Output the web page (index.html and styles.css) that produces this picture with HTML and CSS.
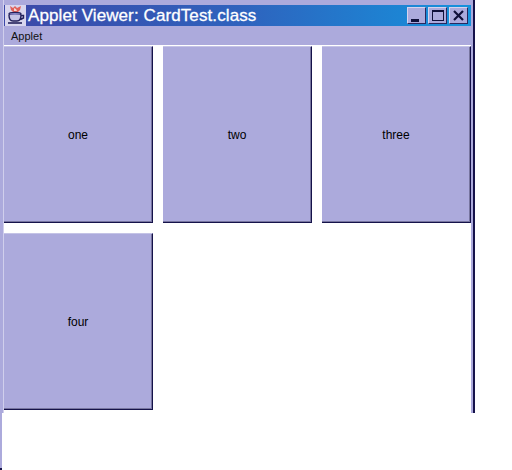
FILE: index.html
```html
<!DOCTYPE html>
<html lang="en">
<head>
    <meta charset="UTF-8">
    <title>Applet Viewer: CardTest.class</title>
    <link rel="stylesheet" href="styles.css">
</head>
<body>
    <div class="window">
        <div class="titleBar">
            <svg class="javaIcon" width="21" height="21" viewBox="0 0 21 21">
                <rect width="21" height="21" fill="#d8d6ee"/>
                <path d="M5 1l3 2 2-2 2 2 4-2-1 4-2 2H8L6 5z" fill="#e0605a"/>
                <path d="M9 3l2 1 1 2-3 0z" fill="#f4d8d0"/>
                <ellipse cx="10" cy="9" rx="6" ry="1.600" fill="#8a88c8" stroke="#22205a" stroke-width="1.400"/>
                <path d="M4 10c0 3.500 1.500 6 4 6h4c2.500 0 4-2.500 4-6M16 10.500h2.500v2.500l-3 1.500" fill="#c4c3e6" stroke="#22205a" stroke-width="1.400"/>
                <path d="M3 18h14" stroke="#22205a" stroke-width="1.600"/>
            </svg>
            <span class="titleText">Applet Viewer: CardTest.class</span>
            <div class="titleButtons">
                <div class="titleButton"><span class="minIcon"></span></div>
                <div class="titleButton"><span class="maxIcon"></span></div>
                <div class="titleButton closeButton">
                    <svg width="11" height="11" viewBox="0 0 11 11">
                        <path d="M1 1l9 9M10 1l-9 9" stroke="#10103a" stroke-width="2.200"/>
                    </svg>
                </div>
            </div>
        </div>
        <div class="menuBar"><span>Applet</span></div>
        <div class="cardGrid">
            <div class="card">one</div>
            <div class="card">two</div>
            <div class="card">three</div>
            <div class="card">four</div>
        </div>
    </div>
    <div class="leftover"></div>
</body>
</html>
```

FILE: styles.css
```css
body {
    margin: 0;
    background-color: #fff;
    font-family: "Liberation Sans", Arial, sans-serif;
}

.window {
    width: 475px;
    height: 413px;
    padding: 5px 0 0 1px;
    box-sizing: border-box;
    border-left: 3px solid #acaadc;
    border-right: 2px solid #15124a;
    background: linear-gradient(#acaadc 0, #acaadc 45px, #fff 45px);
    box-shadow: inset -2px 0 0 #acaadc, inset 1px 0 0 #d0cfec;
}

.titleBar {
    display: flex;
    align-items: center;
    width: 467px;
    height: 21px;
    box-sizing: border-box;
    padding: 0 3px 0 1px;
    background: linear-gradient(to right, #3c48a8, #2f62bd 50%, #1593dd);
}

.javaIcon {
    flex: none;
}

.titleText {
    margin-left: 2px;
    font-size: 17px;
    letter-spacing: 0.1px;
    color: #fff;
    -webkit-text-stroke: 0.3px #fff;
    white-space: nowrap;
}

.titleButtons {
    display: flex;
    gap: 2px;
    margin-left: auto;
}

.titleButton {
    display: flex;
    align-items: center;
    justify-content: center;
    width: 19px;
    height: 17px;
    box-sizing: border-box;
    background-color: #acaadc;
    border: 1px solid;
    border-color: #d5d4ee #2a285e #2a285e #d5d4ee;
}

.minIcon {
    width: 8px;
    height: 3px;
    margin-top: 9px;
    margin-right: 3px;
    background-color: #10103a;
}

.maxIcon {
    width: 12px;
    height: 11px;
    box-sizing: border-box;
    border: 1px solid #10103a;
    border-top-width: 2px;
}

.menuBar {
    height: 19px;
    padding-left: 7px;
    font-size: 11px;
    line-height: 21px;
    color: #111;
}

.cardGrid {
    display: grid;
    grid-template-columns: 149px 149px 149px;
    grid-template-rows: 177px 177px;
    column-gap: 10px;
    row-gap: 10px;
    margin-top: 1px;
}

.card {
    display: flex;
    align-items: center;
    justify-content: center;
    box-sizing: border-box;
    background-color: #acaadc;
    border-top: 1px solid #c4c3e6;
    border-right: 1px solid #15124a;
    border-bottom: 1px solid #15124a;
    box-shadow: inset -1px -1px 0 #77759f;
    font-size: 12px;
    color: #000;
}

.leftover {
    width: 2px;
    height: 55px;
    background-color: #acaadc;
    border-bottom: 2px solid #15124a;
}
```
